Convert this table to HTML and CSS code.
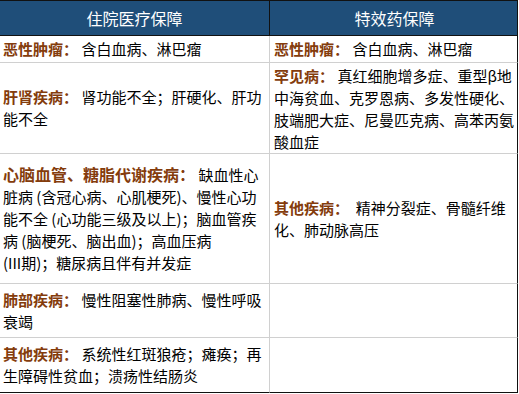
FILE: index.html
```html
<!DOCTYPE html>
<html lang="zh-CN">
<head>
<meta charset="utf-8">
<title>保障对比</title>
<link rel="stylesheet" href="styles.css">
</head>
<body>
<div class="grid">
  <div class="cell head left">住院医疗保障</div>
  <div class="cell head right">特效药保障</div>

  <div class="cell left"><p><span class="lab">恶性肿瘤：</span> 含白血病、淋巴瘤</p></div>
  <div class="cell right"><p><span class="lab">恶性肿瘤：</span> 含白血病、淋巴瘤</p></div>

  <div class="cell left"><p><span class="lab">肝肾疾病：</span> 肾功能不全；肝硬化、肝功能不全</p></div>
  <div class="cell right top"><p><span class="lab">罕见病：</span> 真红细胞增多症、重型β地中海贫血、克罗恩病、多发性硬化、肢端肥大症、尼曼匹克病、高苯丙氨酸血症</p></div>

  <div class="cell left"><p><span class="lab big">心脑血管、糖脂代谢疾病：</span> 缺血性心脏病 (含冠心病、心肌梗死)、慢性心功能不全 (心功能三级及以上)；脑血管疾病 (脑梗死、脑出血)；高血压病<br>(III期)；糖尿病且伴有并发症</p></div>
  <div class="cell right"><p><span class="lab">其他疾病：</span>&nbsp; 精神分裂症、骨髓纤维化、肺动脉高压</p></div>

  <div class="cell left"><p><span class="lab">肺部疾病：</span> 慢性阻塞性肺病、慢性呼吸衰竭</p></div>
  <div class="cell right"></div>

  <div class="cell left last"><p><span class="lab">其他疾病：</span> 系统性红斑狼疮；瘫痪；再生障碍性贫血；溃疡性结肠炎</p></div>
  <div class="cell right last"></div>
</div>
</body>
</html>
```
FILE: styles.css
```css
html, body {
  margin: 0;
  padding: 0;
  background: #ffffff;
}

.grid {
  display: grid;
  grid-template-columns: 270px 248px;
  grid-template-rows: 35px 27px 91px 130px 54px 55px;
  width: 518px;
  border-top: 1px solid #111111;
  font-family: "Noto Sans CJK SC", "Noto Sans", sans-serif;
  font-size: 15px;
  line-height: 22px;
  color: #000000;
}

.cell {
  box-sizing: border-box;
  display: flex;
  align-items: center;
  border-bottom: 1px solid #d0d0d0;
  border-right: 1px solid #d0d0d0;
  padding: 2px 3px;
}

.cell.right {
  border-right-color: #111111;
  padding: 2px 2px 2px 4px;
}

.cell.top {
  align-items: flex-start;
}

.cell.last {
  border-bottom-color: #111111;
}

.cell p {
  margin: 0;
}

.head {
  background: #1f4e79;
  color: #ffffff;
  font-size: 16px;
  justify-content: center;
  border-bottom-color: #111111;
  border-right-color: #111111;
}

.lab {
  color: #843c0c;
  font-weight: bold;
}

.lab.big {
  font-size: 16px;
}
```
